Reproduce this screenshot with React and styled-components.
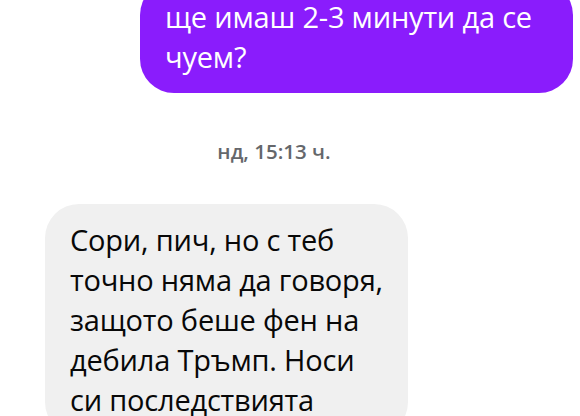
import React from 'react'
import styled, { createGlobalStyle } from 'styled-components'

const GlobalStyle = createGlobalStyle`
  html, body {
    margin: 0;
    padding: 0;
    background: #ffffff;
    overflow: hidden;
  }
  body {
    font-family: "Open Sans", "Noto Sans", sans-serif;
  }
`

const Thread = styled.div`
  display: flex;
  flex-direction: column;
  width: 580px;
  height: 416px;
  overflow: hidden;
`

const Scroller = styled.div`
  display: flex;
  flex-direction: column;
  margin-top: -19px;
`

const Row = styled.div`
  display: flex;
  justify-content: ${props => (props.$mine ? 'flex-end' : 'flex-start')};
  padding: ${props => (props.$mine ? '0 7px 0 0' : '0 0 0 45px')};
`

const Bubble = styled.div`
  box-sizing: border-box;
  width: ${props => props.$width}px;
  padding: 16px 25px 16px 25px;
  border-radius: 34px;
  background: ${props => (props.$mine ? '#8a1cfc' : '#f0f0f0')};
  color: ${props => (props.$mine ? '#ffffff' : '#080808')};
  font-size: 29px;
  line-height: 40px;
  letter-spacing: -0.2px;
  white-space: nowrap;
`

const Stamp = styled.div`
  display: flex;
  justify-content: center;
  padding: 0 32px 0 0;
  margin: 45px 0 40px;
  color: #65676b;
  font-size: 20.5px;
  font-weight: 600;
  line-height: 26px;
`

export default function App() {
  return (
    <Thread>
      <GlobalStyle />
      <Scroller>
        <Row $mine>
          <Bubble $mine $width={433}>
            ще имаш 2-3 минути да се
            <br />
            чуем?
          </Bubble>
        </Row>

        <Stamp>нд, 15:13 ч.</Stamp>

        <Row>
          <Bubble $width={363}>
            Сори, пич, но с теб
            <br />
            точно няма да говоря,
            <br />
            защото беше фен на
            <br />
            дебила Тръмп. Носи
            <br />
            си последствията
          </Bubble>
        </Row>
      </Scroller>
    </Thread>
  )
}
